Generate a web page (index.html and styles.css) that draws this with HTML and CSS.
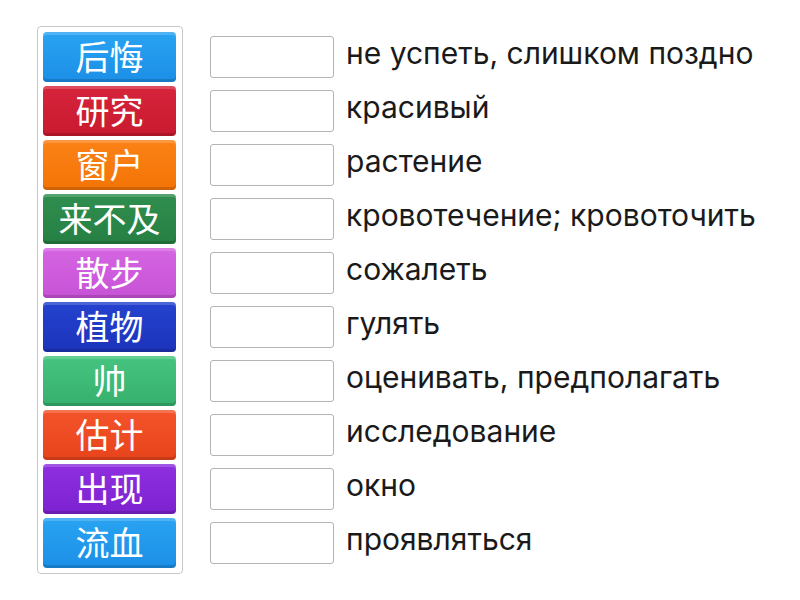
FILE: index.html
```html
<!DOCTYPE html>
<html>
<head>
<meta charset="utf-8">
<link rel="stylesheet" href="styles.css">
</head>
<body>
<div class="page">
  <div class="tiles">
    <div class="tile c-blue">后悔</div>
    <div class="tile c-red">研究</div>
    <div class="tile c-orange">窗户</div>
    <div class="tile c-green">来不及</div>
    <div class="tile c-pink">散步</div>
    <div class="tile c-navy">植物</div>
    <div class="tile c-mint">帅</div>
    <div class="tile c-vermilion">估计</div>
    <div class="tile c-purple">出现</div>
    <div class="tile c-blue">流血</div>
  </div>
  <div class="rows">
    <div class="row"><div class="box"></div><span class="label">не успеть, слишком поздно</span></div>
    <div class="row"><div class="box"></div><span class="label">красивый</span></div>
    <div class="row"><div class="box"></div><span class="label">растение</span></div>
    <div class="row"><div class="box"></div><span class="label">кровотечение; кровоточить</span></div>
    <div class="row"><div class="box"></div><span class="label">сожалеть</span></div>
    <div class="row"><div class="box"></div><span class="label">гулять</span></div>
    <div class="row"><div class="box"></div><span class="label">оценивать, предполагать</span></div>
    <div class="row"><div class="box"></div><span class="label">исследование</span></div>
    <div class="row"><div class="box"></div><span class="label">окно</span></div>
    <div class="row"><div class="box"></div><span class="label">проявляться</span></div>
  </div>
</div>
</body>
</html>
```

FILE: styles.css
```css
html, body {
  margin: 0;
  padding: 0;
  background: #fff;
}
.page {
  display: flex;
  align-items: flex-start;
  padding: 26px 0 0 37px;
}
.tiles {
  display: flex;
  flex-direction: column;
  gap: 4px;
  padding: 5px 6px 5px 5px;
  border: 1px solid #c8c8c8;
  border-radius: 4px;
}
.tile {
  width: 133px;
  height: 50px;
  box-sizing: border-box;
  border-radius: 4px;
  display: flex;
  align-items: center;
  justify-content: center;
  color: #fff;
  font-family: "Noto Sans CJK SC", "Noto Sans", sans-serif;
  font-weight: 400;
  font-size: 34px;
  line-height: 1;
  padding-bottom: 3px;
  box-shadow: inset 0 3px 0 rgba(255,255,255,0.18), inset 0 -3px 0 rgba(0,0,0,0.15);
}
.c-blue { background: linear-gradient(#2aa3f2, #1b8fe6); }
.c-red { background: linear-gradient(#d6243b, #c81a30); }
.c-orange { background: linear-gradient(#fb8216, #f47406); }
.c-green { background: linear-gradient(#2f8f4f, #267f43); }
.c-pink { background: linear-gradient(#d565e2, #c752d6); }
.c-navy { background: linear-gradient(#2443cf, #1c33bb); }
.c-mint { background: linear-gradient(#46c47f, #36b16d); }
.c-vermilion { background: linear-gradient(#f4532a, #e8441c); }
.c-purple { background: linear-gradient(#8e2fe0, #7d22d0); }
.rows {
  display: flex;
  flex-direction: column;
  gap: 4px;
  margin-left: 27px;
  padding-top: 6px;
}
.row {
  height: 50px;
  display: flex;
  align-items: center;
  gap: 12px;
}
.box {
  width: 124px;
  height: 42px;
  box-sizing: border-box;
  border: 1px solid #b4b4b4;
  border-radius: 3px;
  background: #fff;
}
.label {
  font-family: Inter, Roboto, sans-serif;
  font-size: 30px;
  color: #1a1a1a;
  line-height: 1;
  padding-bottom: 8px;
}
```
